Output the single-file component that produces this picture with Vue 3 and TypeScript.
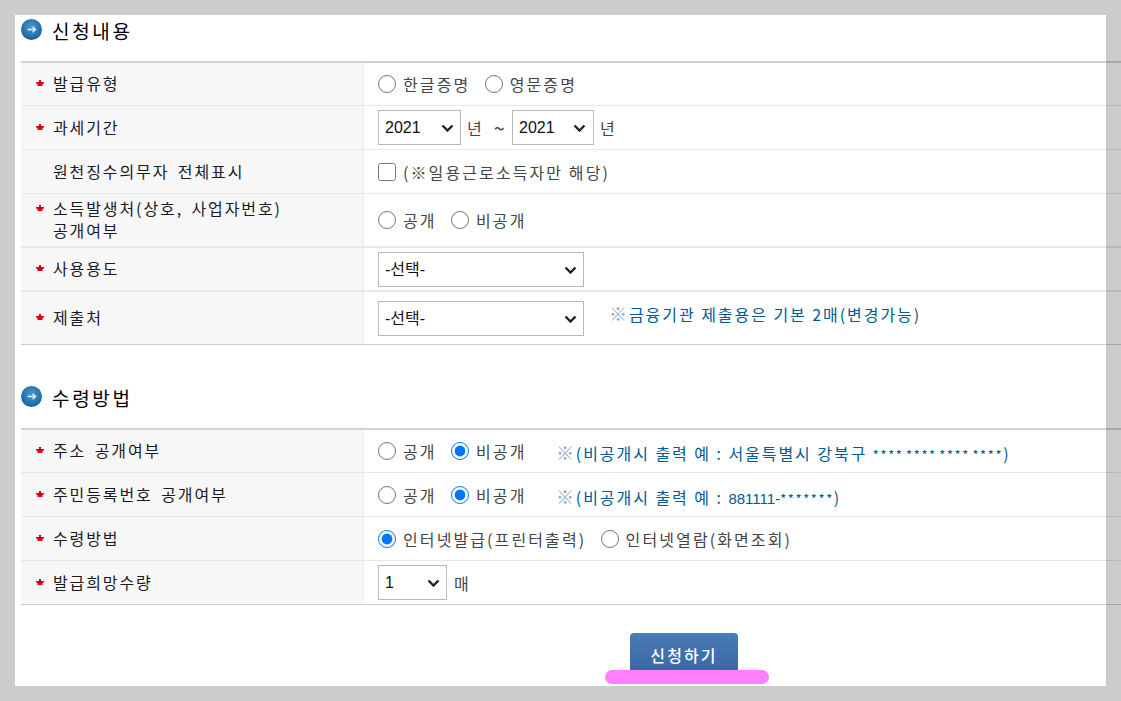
<script setup lang="ts">
interface Choice {
  label: string
  checked?: boolean
}

interface Row {
  label: string[]
  required: boolean
  height: number
  line?: number
  kind: 'radio' | 'period' | 'check' | 'select' | 'count'
  name?: string
  choices?: Choice[]
  note?: string
  noteDigits?: string
  noteStars?: string
  noteGap?: number
  noteShift?: number
}

const applyRows: Row[] = [
  { label: ['발급유형'], required: true, height: 43, kind: 'radio', name: 'lang', choices: [{ label: '한글증명' }, { label: '영문증명' }] },
  { label: ['과세기간'], required: true, height: 44, kind: 'period' },
  { label: ['원천징수의무자 전체표시'], required: false, height: 44, kind: 'check' },
  { label: ['소득발생처(상호, 사업자번호)', '공개여부'], required: true, height: 54, line: 2, kind: 'radio', name: 'src', choices: [{ label: '공개' }, { label: '비공개' }] },
  { label: ['사용용도'], required: true, height: 44, line: 2, kind: 'select' },
  { label: ['제출처'], required: true, height: 53, kind: 'select', note: '금융기관 제출용은 기본 2매(변경가능)', noteGap: 25, noteShift: -4 }
]

const receiveRows: Row[] = [
  { label: ['주소 공개여부'], required: true, height: 43, kind: 'radio', name: 'addr', choices: [{ label: '공개' }, { label: '비공개', checked: true }], note: '(비공개시 출력 예 : 서울특별시 강북구 ', noteStars: '**** **** **** ****', noteGap: 15, noteShift: 2 },
  { label: ['주민등록번호 공개여부'], required: true, height: 44, kind: 'radio', name: 'rrn', choices: [{ label: '공개' }, { label: '비공개', checked: true }], note: '(비공개시 출력 예 : ', noteDigits: '881111-', noteStars: '*******', noteGap: 15, noteShift: 2 },
  { label: ['수령방법'], required: true, height: 44, kind: 'radio', name: 'recv', choices: [{ label: '인터넷발급(프린터출력)', checked: true }, { label: '인터넷열람(화면조회)' }] },
  { label: ['발급희망수량'], required: true, height: 44, kind: 'count' }
]

const sections = [
  { title: '신청내용', rows: applyRows },
  { title: '수령방법', rows: receiveRows }
]
</script>

<template>
  <div class="panel">
    <section v-for="section in sections" :key="section.title" class="section">
      <h2 class="title">
        <svg class="bullet" width="21" height="21" viewBox="0 0 21 21">
          <defs>
            <radialGradient id="ball" cx="50%" cy="40%" r="60%">
              <stop offset="0%" stop-color="#4f9bd0" />
              <stop offset="100%" stop-color="#14609f" />
            </radialGradient>
          </defs>
          <circle cx="10.5" cy="10.5" r="10.5" fill="url(#ball)" />
          <path d="M6.5 10.5h8M11.5 7.8l3 2.7-3 2.7" fill="none" stroke="#dfeaf4" stroke-width="1.5" />
        </svg>
        {{ section.title }}
      </h2>
      <div class="table">
        <div
          v-for="row in section.rows"
          :key="row.label[0]"
          class="row"
          :class="{ thick: row.line === 2 }"
          :style="{ height: row.height + 'px' }"
        >
          <div class="head">
            <div class="label">
              <svg v-if="row.required" class="star" width="8" height="6" viewBox="0 0 8 6">
                <path d="M3 0h2v2h3v1.2L6.5 4v2h-5V4L0 3.2V2h3z" fill="#d8000f" />
              </svg>
              <div v-for="line in row.label" :key="line">{{ line }}</div>
            </div>
          </div>
          <div class="cell">
            <template v-if="row.kind === 'radio'">
              <label v-for="choice in row.choices" :key="choice.label" class="choice">
                <input type="radio" :name="row.name" :checked="choice.checked" />
                <span>{{ choice.label }}</span>
              </label>
            </template>
            <template v-else-if="row.kind === 'period'">
              <select class="year"><option>2021</option></select>
              <span class="unit">년</span>
              <span class="tilde">~</span>
              <select class="year end"><option>2021</option></select>
              <span class="unit">년</span>
            </template>
            <label v-else-if="row.kind === 'check'" class="choice">
              <input type="checkbox" />
              <span>(※일용근로소득자만 해당)</span>
            </label>
            <select v-else-if="row.kind === 'select'" class="wide"><option>-선택-</option></select>
            <template v-else>
              <select class="count"><option>1</option></select>
              <span class="unit">매</span>
            </template>
            <span
              v-if="row.note"
              class="note"
              :style="{
                marginLeft: row.noteGap + 'px',
                marginTop: Math.max(row.noteShift ?? 0, 0) * 2 + 'px',
                marginBottom: Math.max(-(row.noteShift ?? 0), 0) * 2 + 'px'
              }"
            >
              <span class="mark">※</span>{{ row.note }}<span v-if="row.noteDigits" class="digits">{{ row.noteDigits }}</span><span v-if="row.noteStars" class="stars">{{ row.noteStars }}</span><template v-if="row.noteStars">)</template>
            </span>
          </div>
        </div>
      </div>
    </section>
    <div class="actions">
      <button class="submit" type="button">신청하기</button>
      <span class="highlight"></span>
    </div>
  </div>
</template>

<style>
html,
body {
  margin: 0;
  background: #cccccc;
}
</style>

<style scoped>
.panel {
  box-sizing: border-box;
  width: 1091px;
  height: 671px;
  margin: 15px 0 0 15px;
  padding-left: 6px;
  background: #fff;
  font-family: "Noto Sans CJK KR", "Noto Sans", sans-serif;
  color: #333;
}

.section + .section {
  margin-top: 37px;
}

.title {
  display: flex;
  align-items: center;
  gap: 10px;
  height: 30px;
  margin: 0 0 16px;
  font-size: 19px;
  font-weight: 400;
  letter-spacing: 2.7px;
  color: #000;
}

.bullet {
  margin-top: -2px;
}

.table {
  width: 1100px;
  border-top: 2px solid rgba(0, 0, 0, 0.18);
}

.row {
  box-sizing: border-box;
  display: flex;
  border-bottom: 1px solid rgba(0, 0, 0, 0.09);
}

.row.thick {
  border-bottom-width: 2px;
}

.row:last-child {
  border-bottom: 1px solid rgba(0, 0, 0, 0.2);
}

.head {
  box-sizing: border-box;
  display: flex;
  align-items: center;
  flex: none;
  width: 343px;
  padding: 0 0 2px 32px;
  background: #f7f7f7;
  border-right: 1px solid #eee;
}

.star {
  position: absolute;
  left: -17px;
  top: 8px;
}

.label {
  position: relative;
  font-size: 16px;
  line-height: 22px;
  letter-spacing: 1.9px;
  word-spacing: 3px;
  color: #1a1a26;
}

.cell {
  display: flex;
  align-items: center;
  padding-left: 14px;
  font-size: 16px;
  letter-spacing: 2.1px;
  color: #444;
}

.choice {
  display: flex;
  align-items: center;
  margin-right: 14.4px;
}

.choice input {
  width: 18px;
  height: 18px;
  margin: 0 7px 0 0;
}

.year,
.wide,
.count {
  box-sizing: border-box;
  height: 35px;
  padding: 0 0 0 6px;
  appearance: none;
  border: 1px solid #b8b8b8;
  border-radius: 0;
  background: #fff url("data:image/svg+xml,%3Csvg xmlns='http://www.w3.org/2000/svg' width='13' height='8'%3E%3Cpath d='M1.5 1.5l5 5 5-5' fill='none' stroke='%23222' stroke-width='2.4'/%3E%3C/svg%3E") no-repeat;
  font-family: "Liberation Sans", "Noto Sans CJK KR", sans-serif;
  font-size: 16px;
  letter-spacing: 0;
  color: #111;
}

.year {
  width: 83px;
  background-position: 62px 13px;
}

.year.end {
  width: 82px;
  background-position: 60px 13px;
}

.wide {
  width: 206px;
  background-position: 185px 13px;
}

.count {
  width: 69px;
  background-position: 48px 13px;
}

.unit {
  margin-left: 6px;
}

.count + .unit {
  margin-left: 7px;
}

.tilde {
  margin: 0 5px 0 10px;
  font-size: 20px;
  line-height: 1;
}

.note {
  color: #005a96;
  white-space: pre;
  letter-spacing: 1.95px;
}

.mark {
  font-size: 18px;
  line-height: 1;
  font-weight: 700;
  color: #8fa9c6;
}

.digits {
  font-family: "Liberation Sans", sans-serif;
  font-size: 15px;
  letter-spacing: 0;
}

.stars {
  font-size: 13px;
  letter-spacing: 1.6px;
  word-spacing: -2px;
}

.actions {
  position: relative;
  padding-left: 609px;
  margin-top: 28px;
}

.submit {
  display: block;
  width: 108px;
  height: 43px;
  border: 0;
  border-radius: 4px 4px 0 0;
  background: linear-gradient(#4a7cb8, #37659f);
  font-family: inherit;
  font-size: 16px;
  font-weight: 500;
  letter-spacing: 2.1px;
  color: #fff;
}

.highlight {
  position: absolute;
  left: 584px;
  top: 37px;
  width: 164px;
  height: 14px;
  border-radius: 7px;
  background: #ff80ff;
}
</style>
